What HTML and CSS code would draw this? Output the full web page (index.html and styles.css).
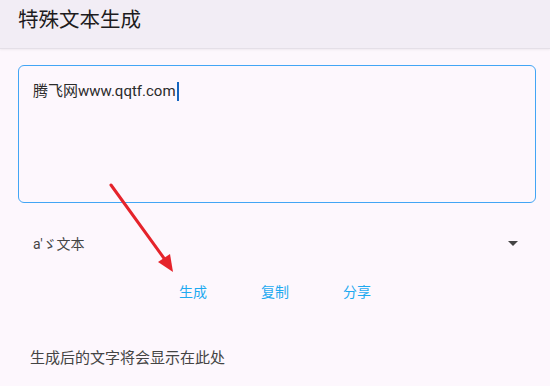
FILE: index.html
```html
<!DOCTYPE html>
<html lang="zh">
<head>
<meta charset="utf-8">
<link rel="stylesheet" href="styles.css">
</head>
<body>
<header class="appbar">
  <h1 class="title">特殊文本生成</h1>
</header>
<main class="content">
  <div class="field">
    <span class="field-text">腾飞网www.qqtf.com</span><span class="caret"></span>
  </div>
  <div class="select">
    <span class="select-text">a'ゞ文本</span>
    <span class="select-arrow"></span>
  </div>
  <div class="actions">
    <button class="btn">生成</button>
    <button class="btn">复制</button>
    <button class="btn">分享</button>
  </div>
  <p class="result">生成后的文字将会显示在此处</p>
</main>
<svg class="annot" width="550" height="386" viewBox="0 0 550 386">
  <line x1="111" y1="185" x2="166" y2="261" stroke="#e5232b" stroke-width="3" stroke-linecap="round"/>
  <polygon points="173,272 158,262 170,254" fill="#e5232b"/>
</svg>
</body>
</html>
```
FILE: styles.css
```css
* { box-sizing: border-box; }
html, body { margin: 0; padding: 0; }
body {
  width: 550px;
  height: 386px;
  overflow: hidden;
  background: #fdf7fd;
  font-family: Roboto, "Noto Sans CJK SC", sans-serif;
  color: #1d1b20;
  position: relative;
}
.appbar {
  height: 49px;
  background: #f2edf5;
  border-bottom: 1px solid #e4dfe7;
  box-shadow: 0 1px 2px rgba(0,0,0,0.06);
  display: flex;
  align-items: center;
  padding: 0 18px 8px;
}
.title {
  margin: 0;
  font-size: 20.5px;
  font-weight: 400;
  color: #1d1b20;
  line-height: 24px;
}
.content {
  padding: 16px 14px 0 18px;
}
.field {
  height: 138px;
  border: 1.5px solid #42a5f5;
  border-radius: 6px;
  padding: 13px 14px;
  display: flex;
  align-items: flex-start;
  font-size: 15px;
  line-height: 24px;
  color: #2b2b2b;
}
.caret {
  display: inline-block;
  width: 2px;
  height: 19px;
  margin-top: 3px;
  margin-left: 1px;
  background: #1565c0;
}
.select {
  display: flex;
  align-items: center;
  justify-content: space-between;
  height: 30px;
  margin-top: 25px;
  padding: 0 18px 0 15px;
  font-size: 14px;
  color: #444;
}
.select-arrow {
  width: 0;
  height: 0;
  border-left: 5px solid transparent;
  border-right: 5px solid transparent;
  border-top: 5px solid #444;
}
.actions {
  display: flex;
  justify-content: center;
  gap: 54px;
  margin-top: 24px;
  padding-right: 4px;
}
.btn {
  background: none;
  border: 0;
  padding: 0;
  font-family: inherit;
  font-size: 14px;
  line-height: 20px;
  color: #1eaaf0;
}
.result {
  margin: 46px 0 0 12px;
  font-size: 15px;
  line-height: 20px;
  color: #444;
}
.annot {
  position: absolute;
  left: 0;
  top: 0;
  pointer-events: none;
}
```
